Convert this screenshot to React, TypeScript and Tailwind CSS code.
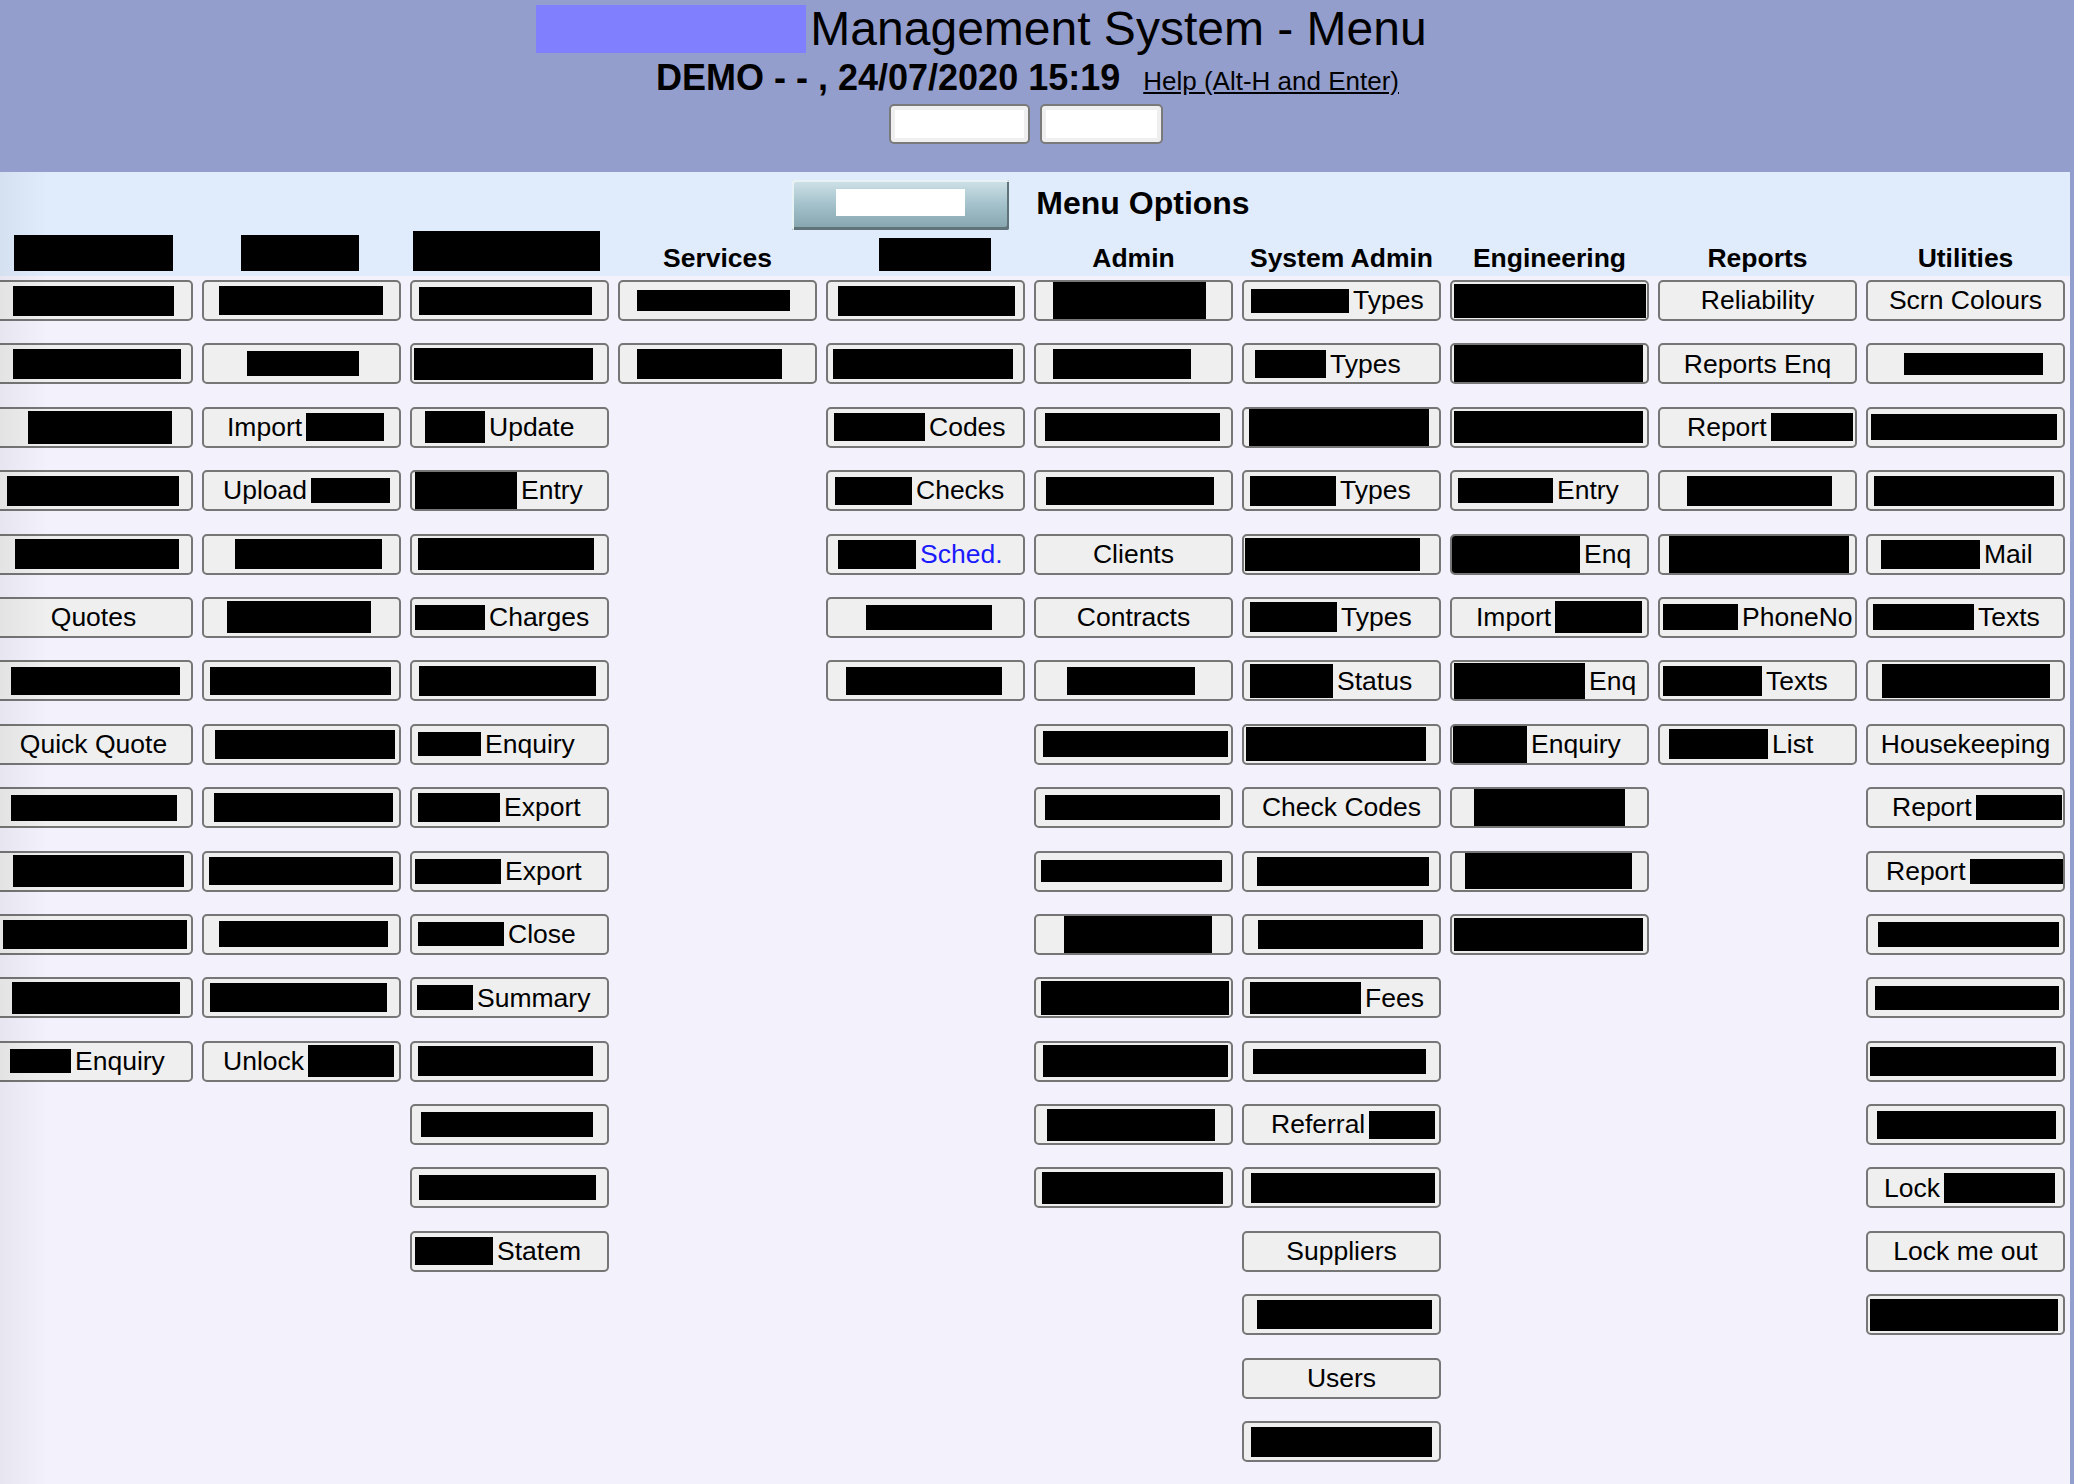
type Cell =
  | string
  | { x: number; w: number; h: number; pre?: string; post?: string; link?: boolean };

// redacted entries: x = left offset inside the button, w/h = size of the black box
const b = (x: number, w: number, h: number): Cell => ({ x, w, h });
const pre = (x: number, text: string, w: number, h: number): Cell => ({ x, pre: text, w, h });
const post = (x: number, w: number, h: number, text: string, link = false): Cell => ({ x, post: text, w, h, link });

type Heading = string | { x: number; w: number; h: number };

const columns: { heading: Heading; items: Cell[] }[] = [
  {
    heading: { x: 20, w: 159, h: 36 },
    items: [
      b(19, 161, 30), b(19, 168, 30), b(34, 144, 33), b(13, 172, 30), b(21, 164, 30), "Quotes",
      b(17, 169, 28), "Quick Quote", b(17, 166, 26), b(19, 171, 32), b(9, 184, 29), b(18, 168, 32),
      post(16, 61, 24, "Enquiry"),
    ],
  },
  {
    heading: { x: 39, w: 118, h: 36 },
    items: [
      b(17, 164, 29), b(45, 112, 25), pre(25, "Import", 78, 28), pre(21, "Upload", 79, 25), b(33, 147, 30),
      b(25, 144, 32), b(8, 181, 28), b(13, 180, 29), b(12, 179, 29), b(7, 184, 28), b(17, 169, 26),
      b(8, 177, 29), pre(21, "Unlock", 86, 32),
    ],
  },
  {
    heading: { x: 3, w: 187, h: 40 },
    items: [
      b(9, 173, 28), b(4, 179, 32), post(15, 60, 32, "Update"), post(5, 102, 37, "Entry"), b(8, 176, 32),
      post(5, 70, 25, "Charges"), b(9, 177, 30), post(8, 63, 24, "Enquiry"), post(8, 82, 29, "Export"),
      post(5, 86, 25, "Export"), post(8, 86, 24, "Close"), post(7, 56, 25, "Summary"), b(8, 175, 30),
      b(11, 172, 25), b(9, 177, 25), post(5, 78, 28, "Statem"),
    ],
  },
  {
    heading: "Services",
    items: [b(19, 153, 21), b(19, 145, 30)],
  },
  {
    heading: { x: 53, w: 112, h: 33 },
    items: [
      b(12, 177, 30), b(7, 180, 30), post(8, 91, 28, "Codes"), post(9, 77, 28, "Checks"),
      post(12, 78, 29, "Sched.", true), b(40, 126, 25), b(20, 156, 28),
    ],
  },
  {
    heading: "Admin",
    items: [
      b(19, 153, 38), b(19, 138, 30), b(11, 175, 28), b(12, 168, 28), "Clients", "Contracts",
      b(33, 128, 28), b(9, 185, 26), b(11, 175, 25), b(7, 181, 22), b(30, 148, 37), b(7, 188, 34),
      b(9, 185, 32), b(13, 168, 32), b(8, 181, 32),
    ],
  },
  {
    heading: "System Admin",
    items: [
      post(9, 98, 24, "Types"), post(13, 71, 28, "Types"), b(7, 180, 38), post(8, 86, 30, "Types"),
      b(3, 175, 33), post(8, 87, 30, "Types"), post(8, 83, 34, "Status"), b(4, 180, 34), "Check Codes",
      b(15, 172, 29), b(16, 165, 29), post(8, 111, 32, "Fees"), b(11, 173, 25), pre(29, "Referral", 66, 28),
      b(9, 184, 30), "Suppliers", b(15, 175, 29), "Users", b(9, 181, 30),
    ],
  },
  {
    heading: "Engineering",
    items: [
      b(4, 192, 34), b(4, 189, 37), b(4, 189, 32), post(8, 95, 25, "Entry"), post(2, 128, 37, "Enq"),
      pre(26, "Import", 87, 32), post(4, 131, 36, "Enq"), post(3, 74, 38, "Enquiry"), b(24, 151, 37),
      b(15, 167, 36), b(4, 189, 33),
    ],
  },
  {
    heading: "Reports",
    items: [
      "Reliability", "Reports Enq", pre(29, "Report", 82, 28), b(29, 145, 30), b(11, 180, 38),
      post(5, 75, 26, "PhoneNo"), post(5, 99, 30, "Texts"), post(11, 99, 30, "List"),
    ],
  },
  {
    heading: "Utilities",
    items: [
      "Scrn Colours", b(38, 139, 22), b(5, 186, 26), b(8, 180, 30), post(15, 99, 29, "Mail"),
      post(7, 101, 26, "Texts"), b(16, 168, 34), "Housekeeping", pre(26, "Report", 86, 25),
      pre(20, "Report", 93, 25), b(12, 181, 25), b(9, 184, 24), b(4, 186, 29), b(11, 179, 28),
      pre(18, "Lock", 111, 30), "Lock me out", b(4, 188, 32),
    ],
  },
];

function Redact({ w, h }: { w: number; h: number }) {
  return <span className="block shrink-0 bg-black" style={{ width: w, height: h }} />;
}

function MenuButton({ cell }: { cell: Cell }) {
  const base =
    "flex h-[41px] w-full items-center overflow-hidden whitespace-nowrap rounded-[5px] border-2 border-[#767676] bg-[#efefef] text-[26.5px] leading-none text-black";

  if (typeof cell === "string") {
    return (
      <button type="button" className={`${base} justify-center`}>
        {cell}
      </button>
    );
  }

  return (
    <button
      type="button"
      className={`${base} justify-start gap-[4px]`}
      style={{ paddingLeft: Math.max(cell.x - 2, 0) }}
    >
      {cell.pre && <span>{cell.pre}</span>}
      <Redact w={cell.w} h={cell.h} />
      {cell.post && <span className={cell.link ? "text-[#1a1aff]" : ""}>{cell.post}</span>}
    </button>
  );
}

export default function App() {
  return (
    <div className="flex min-h-screen w-[2074px] flex-col bg-[#949ecc] font-['Liberation_Sans',Arial,sans-serif] text-black">
      {/* page header */}
      <div className="h-[172px] shrink-0">
        <div className="flex justify-center pr-[111px] pt-[5px]">
          <div className="h-[48px] w-[270px] bg-[#8080ff]" />
          <h1 className="ml-[4px] text-[48px] leading-[48px]">Management System - Menu</h1>
        </div>
        <div className="mt-[7px] flex items-baseline justify-center pr-[19px]">
          <span className="text-[36px] font-bold leading-[36px]">DEMO - - , 24/07/2020 15:19</span>
          <a href="#" className="ml-[23px] text-[26px] leading-[26px] underline">
            Help (Alt-H and Enter)
          </a>
        </div>
        <div className="mt-[8px] flex justify-center gap-[10px] pr-[22px]">
          <button type="button" className="h-[40px] w-[141px] rounded-[5px] border-2 border-[#7a7a7a] bg-[#efefef] p-[4px]">
            <span className="block h-full w-full bg-white" />
          </button>
          <button type="button" className="h-[40px] w-[123px] rounded-[5px] border-2 border-[#7a7a7a] bg-[#efefef] p-[4px]">
            <span className="block h-full w-full bg-white" />
          </button>
        </div>
      </div>

      {/* menu body */}
      <div className="relative w-[2070px] flex-1 overflow-hidden bg-[#f3f1fc]">
        <div className="h-[104px] bg-[#e0ecfc] pt-[8px]">
          <div className="flex h-[50px] items-center justify-center gap-[27px] pr-[28px]">
            <div className="flex h-[50px] w-[217px] items-center justify-center rounded-[2px] bg-linear-to-b from-[#d0e2e8] via-[#a3c1cb] to-[#85a3ad] shadow-[inset_2px_2px_0_#e8f1f3,inset_-2px_-3px_0_#5f7379]">
              <div className="-mt-[5px] h-[27px] w-[129px] bg-white" />
            </div>
            <span className="-mt-[4px] text-[32px] font-bold">Menu Options</span>
          </div>
          <div className="-ml-[6px] grid h-[46px] grid-cols-[repeat(10,199px)] gap-x-[9px]">
            {columns.map((col, i) =>
              typeof col.heading === "string" ? (
                <div key={i} className="flex items-end justify-center pb-[5px] text-[26.5px] font-bold leading-none">
                  {col.heading}
                </div>
              ) : (
                <div key={i} className="flex items-end justify-start pb-[5px]" style={{ paddingLeft: col.heading.x }}>
                  <Redact w={col.heading.w} h={col.heading.h} />
                </div>
              ),
            )}
          </div>
        </div>

        <div className="-ml-[6px] grid grid-cols-[repeat(10,199px)] items-start gap-x-[9px] pb-[24px] pt-[4px]">
          {columns.map((col, i) => (
            <div key={i} className="flex flex-col gap-[22.4px]">
              {col.items.map((cell, j) => (
                <MenuButton key={j} cell={cell} />
              ))}
            </div>
          ))}
        </div>

        <div className="pointer-events-none absolute inset-y-0 left-0 w-[48px] bg-linear-to-r from-black/5 to-transparent" />
      </div>
    </div>
  );
}
